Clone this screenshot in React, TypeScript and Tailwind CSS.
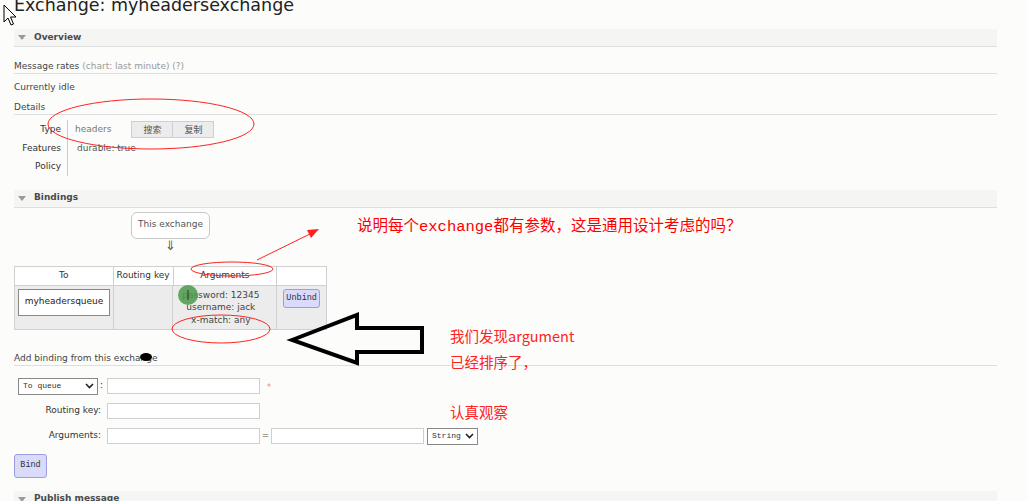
import React from 'react'

const sans = { fontFamily: '"DejaVu Sans", Verdana, sans-serif' }

function SectionHeader({ title }: { title: string }) {
  return (
    <div className="flex h-[18px] items-center gap-[8px] border-b border-[#dedede] bg-[#f5f5f4] pl-[4px]">
      <svg width="8" height="5" viewBox="0 0 8 5">
        <polygon points="0,0 8,0 4,5" fill="#9a9a9a" />
      </svg>
      <span className="text-[9px] font-bold text-[#4a4a4a]">{title}</span>
    </div>
  )
}

function Chevron() {
  return (
    <svg width="9" height="6" viewBox="0 0 9 6">
      <polyline points="1,1 4.5,4.5 8,1" fill="none" stroke="#222" strokeWidth="1.6" />
    </svg>
  )
}

function Annotations() {
  return (
    <svg className="pointer-events-none absolute left-0 top-0" width="1028" height="501" viewBox="0 0 1028 501">
      <ellipse cx="151" cy="124" rx="103" ry="25" fill="none" stroke="#f22" strokeWidth="1" />
      <ellipse cx="232" cy="269" rx="41" ry="7" fill="none" stroke="#f22" strokeWidth="1" />
      <ellipse cx="221" cy="329" rx="49" ry="14" fill="none" stroke="#f22" strokeWidth="1" />
      <line x1="257" y1="260" x2="312" y2="233" stroke="#f22" strokeWidth="1" />
      <polygon points="319,229 307,230 311,238" fill="#f22" />
      <polygon
        points="292,340 357,315 357,328 422,328 422,352 357,352 357,363"
        fill="none"
        stroke="#000"
        strokeWidth="4"
        strokeLinejoin="miter"
      />
      <circle cx="188" cy="295" r="10" fill="#4b9a4b" fillOpacity="0.85" />
      <line x1="188" y1="290" x2="188" y2="300" stroke="#3a2a1a" strokeWidth="1" />
      <ellipse cx="146" cy="357" rx="6" ry="4" fill="#000" />
      <path d="M4 5 L4 22 L8 18 L11 25 L13.5 24 L10.5 17 L16 17 Z" fill="#fff" stroke="#000" strokeWidth="1" />
    </svg>
  )
}

export default function App() {
  const redSong = { fontFamily: '"Liberation Mono", "Noto Sans CJK SC", monospace' }
  const redSans = { fontFamily: '"Noto Sans CJK SC", sans-serif' }
  const mono = { fontFamily: '"Liberation Mono", monospace' }
  return (
    <div className="relative h-[501px] w-[1028px] overflow-hidden bg-[#fcfcfb] text-[#444]" style={sans}>
      <div className="w-[997px] pl-[14px]">
        <div className="mt-[-4px] h-[18px] text-[17.5px] leading-[18px] text-[#222]">Exchange: myheadersexchange</div>
        <div className="mt-[15px]">
          <SectionHeader title="Overview" />
        </div>
        <div className="mt-[12px] h-[15px] border-b border-[#dedede] text-[9px] leading-[14px]">
          <span>Message rates</span>
          <span className="ml-[3px] text-[#999]">(chart: last minute) (?)</span>
        </div>
        <div className="mt-[6px] h-[14px] text-[9px] leading-[14px]">Currently idle</div>
        <div className="mt-[6px] h-[15px] border-b border-[#dedede] text-[9px] leading-[14px]">Details</div>
        <div className="mt-[5px] flex text-[9px]">
          <div className="flex w-[53px] flex-col items-end pr-[6px] text-[#333]">
            <span className="h-[18.5px] leading-[18.5px]">Type</span>
            <span className="h-[18.5px] leading-[18.5px]">Features</span>
            <span className="h-[18.5px] leading-[18.5px]">Policy</span>
          </div>
          <div className="flex flex-col border-l border-[#ccc] pl-[7px]">
            <div className="flex h-[18.5px] items-center">
              <span className="text-[#777]">headers</span>
              <div className="ml-[20px] flex h-[17px] border border-[#cfcfcf] bg-[#ececec] text-[#555]" style={redSans}>
                <span className="flex w-[41px] items-center justify-center border-r border-[#cfcfcf] text-[9px]">搜索</span>
                <span className="flex w-[40px] items-center justify-center text-[9px]">复制</span>
              </div>
            </div>
            <span className="h-[18.5px] pl-[2px] leading-[18.5px] text-[#555]">durable: true</span>
            <span className="h-[18.5px]" />
          </div>
        </div>
        <div className="mt-[14px]">
          <SectionHeader title="Bindings" />
        </div>
        <div className="ml-[117px] mt-[4px] flex w-[79px] flex-col items-center">
          <div className="flex h-[27px] w-[79px] items-center justify-center rounded-[6px] border border-[#c8c8c8] bg-white text-[9px] text-[#555]">
            This exchange
          </div>
          <div className="h-[14px] text-[13px] leading-[14px] text-[#555]">⇓</div>
        </div>
        <div className="mt-[13px] w-[313px] border border-[#d0d0d0] text-[9px]">
          <div className="flex h-[19px] border-b border-[#d0d0d0] bg-white text-[#333]">
            <div className="flex w-[99px] items-center justify-center border-r border-[#d0d0d0]">To</div>
            <div className="flex w-[60px] items-center justify-center border-r border-[#d0d0d0]">Routing key</div>
            <div className="flex w-[104px] items-center justify-center border-r border-[#d0d0d0]">Arguments</div>
            <div className="w-[49px]" />
          </div>
          <div className="flex h-[43px] bg-[#ececec]">
            <div className="w-[99px] border-r border-[#d0d0d0] pl-[3px] pt-[3px]">
              <div className="flex h-[27px] w-[92px] items-center justify-center border border-[#888] bg-white text-[#222]">myheadersqueue</div>
            </div>
            <div className="w-[60px] border-r border-[#d0d0d0]" />
            <div className="flex w-[104px] flex-col items-center border-r border-[#d0d0d0] pr-[8px] pt-[3px] leading-[12.5px] text-[#444]">
              <span>password: 12345</span>
              <span>username: jack</span>
              <span>x-match: any</span>
            </div>
            <div className="w-[49px] pl-[6px] pt-[3px]">
              <div className="flex h-[19px] w-[37px] items-center justify-center rounded-[3px] border border-[#9c9ce0] bg-[#dadafa] text-[8.5px] text-[#333]" style={mono}>
                Unbind
              </div>
            </div>
          </div>
        </div>
        <div className="mt-[21px] h-[15px] border-b border-[#dedede] text-[9px] leading-[14px]">Add binding from this exchange</div>
        <div className="mt-[12px] flex flex-col gap-[8px] text-[9px]">
          <div className="flex h-[17px] items-center">
            <div className="flex w-[93px] items-center justify-end gap-[2px]">
              <div className="flex h-[17px] w-[80px] items-center justify-between border border-[#888] bg-white pl-[4px] pr-[3px] text-[8px] text-[#333]" style={mono}>
                To queue
                <Chevron />
              </div>
              <span className="w-[7px] text-[#333]">:</span>
            </div>
            <div className="h-[16px] w-[153px] border border-[#cfcfcf] bg-white" />
            <span className="ml-[7px] mt-[6px] self-start text-[8px] leading-[8px] text-[#f08080]">*</span>
          </div>
          <div className="flex h-[17px] items-center">
            <div className="w-[93px] pr-[6px] text-right text-[#333]">Routing key:</div>
            <div className="h-[16px] w-[153px] border border-[#cfcfcf] bg-white" />
          </div>
          <div className="flex h-[17px] items-center">
            <div className="w-[93px] pr-[6px] text-right text-[#333]">Arguments:</div>
            <div className="h-[16px] w-[153px] border border-[#cfcfcf] bg-white" />
            <span className="w-[11px] text-center text-[#555]">=</span>
            <div className="h-[16px] w-[153px] border border-[#cfcfcf] bg-white" />
            <div className="ml-[3px] flex h-[17px] w-[51px] items-center justify-between border border-[#888] bg-white pl-[4px] pr-[3px] text-[8px] text-[#333]" style={mono}>
              String
              <Chevron />
            </div>
          </div>
        </div>
        <div className="mt-[9px] flex h-[24px] w-[33px] items-center justify-center rounded-[3px] border border-[#9c9ce0] bg-[#dadafa] text-[8.5px] text-[#333]" style={mono}>
          Bind
        </div>
        <div className="mt-[13px]">
          <SectionHeader title="Publish message" />
        </div>
      </div>

      <Annotations />

      <div className="absolute left-[357px] top-[217px] text-[15.5px] leading-[20px] text-[#f00]" style={redSong}>
        说明每个exchange都有参数，这是通用设计考虑的吗？
      </div>
      <div className="absolute left-[450px] top-[326px] text-[14.5px] leading-[20px] text-[#f22]" style={redSans}>
        我们发现argument
      </div>
      <div className="absolute left-[450px] top-[352px] text-[14.5px] leading-[20px] text-[#f22]" style={redSans}>
        已经排序了，
      </div>
      <div className="absolute left-[450px] top-[402px] text-[14.5px] leading-[20px] text-[#f22]" style={redSans}>
        认真观察
      </div>
    </div>
  )
}
